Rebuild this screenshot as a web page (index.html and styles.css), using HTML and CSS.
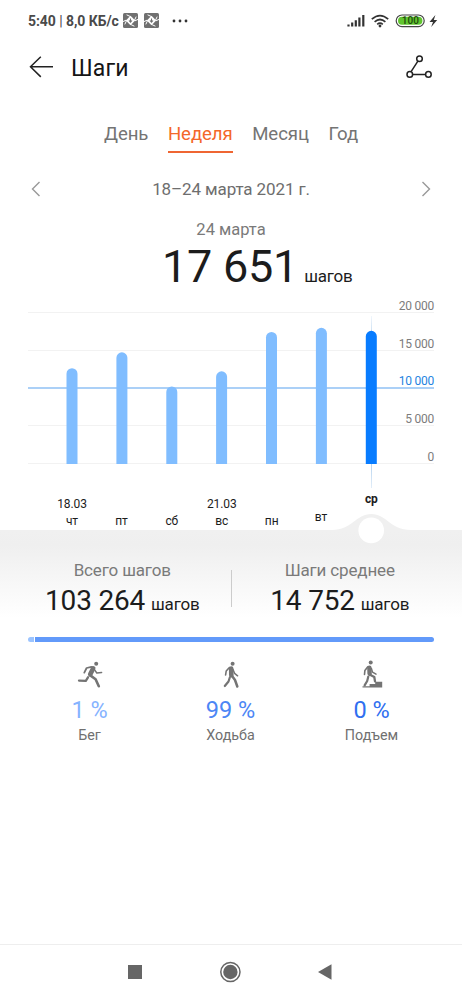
FILE: index.html
```html
<!DOCTYPE html>
<html lang="ru">
<head>
<meta charset="utf-8">
<title>Шаги</title>
<link rel="stylesheet" href="styles.css">
</head>
<body>
<div class="screen">
  <div class="status">
    <span class="status-text">5:40 <i>|</i> 8,0 КБ/с</span>
    <svg class="app-badge" width="15" height="15" viewBox="0 0 15 15"><rect width="15" height="15" rx="1.5" fill="#707070"/><path d="M7.5 2.8 12.2 7.5 7.5 12.2 2.8 7.5z" fill="#fff"/><path d="M3.6 1.8 7.5 3.6M13.2 3.6 11.4 7.5M11.4 13.2 7.5 11.4M1.8 11.4 3.6 7.5M0 8.6 3 7.2M15 6.4 12 7.8" stroke="#fff" stroke-width="1"/><path d="M7.5 5.4V9M6 7.5 7.5 9.2 9 7.5" fill="none" stroke="#707070" stroke-width="1.1"/></svg>
    <svg class="app-badge" width="15" height="15" viewBox="0 0 15 15"><rect width="15" height="15" rx="1.5" fill="#707070"/><path d="M7.5 2.8 12.2 7.5 7.5 12.2 2.8 7.5z" fill="#fff"/><path d="M3.6 1.8 7.5 3.6M13.2 3.6 11.4 7.5M11.4 13.2 7.5 11.4M1.8 11.4 3.6 7.5M0 8.6 3 7.2M15 6.4 12 7.8" stroke="#fff" stroke-width="1"/><path d="M7.5 5.4V9M6 7.5 7.5 9.2 9 7.5" fill="none" stroke="#707070" stroke-width="1.1"/></svg>
    <svg class="more" width="16" height="4" viewBox="0 0 16 4"><g fill="#333"><circle cx="2" cy="2" r="1.4"/><circle cx="8" cy="2" r="1.4"/><circle cx="14" cy="2" r="1.4"/></g></svg>
    <svg class="system" width="92" height="16" viewBox="0 0 92 16">
      <path d="M1.5 13.6V11.6M5.2 13.6V9.6M8.8 13.6V7.2M12.4 13.6V4.6M16.3 13.6V2" stroke="#333" stroke-width="2.2" fill="none"/>
      <path d="M24.8 6.2Q33 -1 41.2 6.2M27.6 8.8Q33 4.2 38.4 8.8M30.2 11.3Q33 9 35.8 11.3" stroke="#333" stroke-width="1.7" fill="none"/><circle cx="33" cy="13" r="1.4" fill="#333"/>
      <rect x="49.2" y="2" width="28" height="11.6" rx="5.8" fill="#fff" stroke="#444" stroke-width="1.2"/>
      <rect x="51" y="3.8" width="24.4" height="8" rx="4" fill="#61c52f"/>
      <text class="battery-text" x="63.4" y="11.3">100</text>
      <path d="M88.4 2 82.5 8.9H86L84.2 14 90.2 6.9H86.8z" fill="#333"/>
    </svg>
  </div>

  <header class="appbar">
    <svg width="26" height="24" viewBox="0 0 26 24"><path d="M25 10.7H2.5M12.8 .7 2.5 10.7 12.8 20.9" fill="none" stroke="#222" stroke-width="1.5"/></svg>
    <h1>Шаги</h1>
    <svg class="route" width="28" height="26" viewBox="0 0 28 26"><g fill="none" stroke="#222" stroke-width="1.5"><path d="M11.9 6.2 5.1 16.7M6.7 19.4H19.3"/><circle cx="13.5" cy="3.7" r="2.8"/><circle cx="3.8" cy="19.4" r="2.8"/><circle cx="22.4" cy="19.4" r="2.8"/></g></svg>
  </header>

  <nav class="tabs"><span>День</span><span class="active">Неделя</span><span>Месяц</span><span>Год</span></nav>

  <div class="period">
    <svg width="10" height="16" viewBox="0 0 10 16"><path d="M9.5 1 2.5 8 9.5 15" fill="none" stroke="#999" stroke-width="1.4"/></svg>
    <span>18–24 марта 2021 г.</span>
    <svg width="10" height="16" viewBox="0 0 10 16"><path d="M.5 1 7.5 8 .5 15" fill="none" stroke="#999" stroke-width="1.4"/></svg>
  </div>
  <div class="day">24 марта</div>
  <div class="hero"><span class="hero-num">17 651</span><span class="unit">шагов</span></div>

  <svg class="chart" width="462" height="237" viewBox="0 293 462 237">
    <defs><linearGradient id="cursor" x1="0" y1="316" x2="0" y2="488" gradientUnits="userSpaceOnUse"><stop offset="0" stop-color="#b5d2ee" stop-opacity=".2"/><stop offset=".15" stop-color="#b5d2ee"/><stop offset=".85" stop-color="#b5d2ee"/><stop offset="1" stop-color="#b5d2ee" stop-opacity=".4"/></linearGradient></defs>
    <path d="M28 312.5H434M28 350.5H434M28 425.5H434M28 463.5H434" stroke="#f2f2f2"/>
    <path d="M28 388H434" stroke="#8fc0f4" stroke-width="1.4"/>
    <rect x="371" y="316" width="1" height="172" fill="url(#cursor)"/>
    <g class="bars">
      <path d="M66.5 464V373.7a5.5 5.5 0 0 1 11 0V464z"/>
      <path d="M116.4 464V357.8a5.5 5.5 0 0 1 11 0V464z"/>
      <path d="M166.3 464V392a5.5 5.5 0 0 1 11 0V464z"/>
      <path d="M216.1 464V376.8a5.5 5.5 0 0 1 11 0V464z"/>
      <path d="M266 464V337.5a5.5 5.5 0 0 1 11 0V464z"/>
      <path d="M315.9 464V333.3a5.5 5.5 0 0 1 11 0V464z"/>
      <path class="selected" d="M365.8 464V336.3a5.5 5.5 0 0 1 11 0V464z"/>
    </g>
    <g class="scale"><text x="434" y="310">20 000</text><text x="434" y="347.7">15 000</text><text class="goal" x="434" y="385.3">10 000</text><text x="434" y="423">5 000</text><text x="434" y="461">0</text></g>
    <g class="days"><text x="72" y="507.5">18.03</text><text x="221.8" y="507.5">21.03</text><text x="72" y="524.6">чт</text><text x="121.5" y="524.6">пт</text><text x="171.8" y="524.6">сб</text><text x="221.8" y="524.6">вс</text><text x="271.7" y="524.6">пн</text><text x="321" y="520.5">вт</text><text class="today" x="371.3" y="503">ср</text></g>
    <path d="M332 530C352 530 356 514 371.3 514S390 530 411 530z" fill="#f0f0f0"/>
    <circle cx="371.2" cy="530.4" r="12.8" fill="#fff"/>
  </svg>

  <section class="totals">
    <div class="total"><div class="label">Всего шагов</div><div class="value">103 264<span class="unit">шагов</span></div></div>
    <div class="divider"></div>
    <div class="total"><div class="label">Шаги среднее</div><div class="value">14 752<span class="unit">шагов</span></div></div>
  </section>

  <div class="share"><div class="share-run"></div><div class="share-walk"></div></div>

  <section class="modes">
    <div class="mode run">
      <svg width="28" height="30" viewBox="0 0 28 30"><circle cx="20.2" cy="3.8" r="2" fill="#747474"/><g fill="none" stroke="#747474" stroke-linecap="round" stroke-linejoin="round"><path d="M17.2 8.4 14.2 14.4" stroke-width="4.6"/><path d="M15.4 6.8 10.6 8 8.3 12.6" stroke-width="1.8"/><path d="M19 10.4 20.8 13 25.6 12.6" stroke-width="1.5"/><path d="M14.6 15.6 19.6 19.2 22.8 26.2" stroke-width="2.6"/><path d="M12 17.3 9.8 20.8 3 20.6" stroke-width="2.3"/></g></svg>
      <div class="percent">1 %</div><div class="name">Бег</div>
    </div>
    <div class="mode walk">
      <svg width="28" height="30" viewBox="0 0 28 30"><circle cx="15.6" cy="3.8" r="2" fill="#747474"/><g fill="none" stroke="#747474" stroke-linecap="round" stroke-linejoin="round"><path d="M14.2 8.6 14.3 15.2" stroke-width="4.6"/><path d="M12.4 7.5 9.2 11 8.6 15" stroke-width="1.6"/><path d="M16 9.6 17.6 13.3 20.6 15.8" stroke-width="1.5"/><path d="M14.7 15.5 18 20 20.3 26.5" stroke-width="2.5"/><path d="M12.8 17.5 11.5 21.5 7.8 26" stroke-width="2.2"/></g></svg>
      <div class="percent">99 %</div><div class="name">Ходьба</div>
    </div>
    <div class="mode climb">
      <svg width="28" height="30" viewBox="0 0 28 30"><circle cx="12.7" cy="2.6" r="2" fill="#747474"/><path d="M4.5 27.6V26.2H11.6V24H17.2V21.8H24.2V27.6z" fill="#747474"/><g fill="none" stroke="#747474" stroke-linecap="round" stroke-linejoin="round"><path d="M11.4 7.8 11.6 13.8" stroke-width="4.4"/><path d="M9.6 6.9 6.9 10.4 6.5 14.5" stroke-width="1.6"/><path d="M13.4 8.5 14.5 12.1 18 14.2" stroke-width="1.5"/><path d="M12 14.8 16.3 17 17 21.4" stroke-width="2.3"/><path d="M10.3 16.5 9.2 21 6.6 25.4" stroke-width="2.2"/></g></svg>
      <div class="percent">0 %</div><div class="name">Подъем</div>
    </div>
  </section>

  <footer class="navbar">
    <svg width="462" height="56" viewBox="0 945 462 56"><g fill="#666"><rect x="128" y="965" width="14" height="14"/><circle cx="230.4" cy="972" r="7.2"/><path d="M318 972 331.5 964.3V979.7z"/></g><circle cx="230.4" cy="972" r="9.6" fill="none" stroke="#666" stroke-width="1.5"/></svg>
  </footer>
</div>
</body>
</html>
```
FILE: styles.css
```css
* { box-sizing: border-box; }
body { margin: 0; background: #fff; font-family: Roboto, "Liberation Sans", sans-serif; color: #1c1c1c; }
svg { display: block; flex: none; }
.screen { width: 462px; height: 1000px; display: flex; flex-direction: column; overflow: hidden; }

.status { height: 42px; padding: 0 23px 0 28px; display: flex; align-items: center; }
.status-text { font-size: 14px; font-weight: 700; color: #4a4a4a; white-space: nowrap; width: 95px; letter-spacing: -0.06px; }
.status-text i { font-style: normal; font-weight: 400; }
.app-badge { margin: -2px 6px 0 0; }
.more { margin-left: 7px; }
.system { margin-left: auto; }
.battery-text { font-size: 10px; font-weight: 500; fill: #1d4a0c; text-anchor: middle; }

.appbar { height: 51px; padding: 0 28px; display: flex; align-items: center; }
.appbar h1 { margin: 2px 0 0 17px; font-size: 23px; line-height: 30px; font-weight: 400; color: #151515; letter-spacing: 0.15px; }
.route { margin-left: auto; }

.tabs { height: 60px; padding: 29px 0 0 104px; display: flex; gap: 19.6px; align-items: flex-start; font-size: 18.6px; line-height: 24px; color: #747474; letter-spacing: -0.08px; }
.tabs span { height: 31px; }
.tabs .active { color: #f4672a; border-bottom: 2px solid #ef6632; }

.period { height: 67px; padding: 4px 30px 0; display: flex; align-items: center; justify-content: space-between; font-size: 17px; letter-spacing: -0.12px; color: #6e6e6e; }
.day { height: 20px; line-height: 20px; font-size: 16.5px; color: #7a7a7a; text-align: center; }
.hero { height: 53px; padding-left: 162px; display: flex; align-items: baseline; line-height: 53px; }
.hero-num { font-size: 45px; letter-spacing: -0.25px; }
.hero .unit { margin-left: 6px; font-size: 17px; letter-spacing: -0.2px; }

.chart { overflow: visible; position: relative; }
.bars { fill: #80bdff; }
.bars .selected { fill: #087cff; }
.scale { font-size: 12px; fill: #7c7c7c; text-anchor: end; letter-spacing: -0.25px; }
.scale .goal { fill: #2583df; }
.days { font-size: 12px; fill: #1c1c1c; text-anchor: middle; letter-spacing: -0.1px; }
.days .today { font-weight: 700; }

.totals { height: 107px; padding-top: 28px; display: flex; background: linear-gradient(#f0f0f0, #efefef 15px, #fff 88px); }
.total { flex: 1; text-align: center; }
.total:first-child { padding-left: 14px; }
.total:last-child { padding-right: 14px; }
.total .label { font-size: 17px; line-height: 24px; color: #7a7a7a; letter-spacing: -0.15px; }
.total .value { margin-top: 1px; font-size: 28px; line-height: 36px; letter-spacing: -0.2px; }
.total .unit { margin-left: 6px; font-size: 17px; letter-spacing: -0.2px; }
.divider { width: 1px; height: 37px; margin-top: 12px; background: #ccc; }

.share { height: 5px; margin: 0 28px; display: flex; gap: 1px; }
.share-run { width: 6px; background: #9bc4ff; border-radius: 3px 0 0 3px; }
.share-walk { flex: 1; background: #629afa; border-radius: 0 3px 3px 0; }

.modes { padding: 18px 19px 0; display: grid; grid-template-columns: repeat(3, 141px); }
.mode { display: flex; flex-direction: column; align-items: center; }
.percent { margin-top: 4px; font-size: 23.5px; line-height: 32px; }
.name { font-size: 14.3px; line-height: 18px; color: #707070; }
.run .percent { color: #85b3ff; }
.walk .percent { color: #4c86f5; }
.climb .percent { color: #2f6ff0; }

.navbar { margin-top: auto; height: 56px; border-top: 1px solid #eee; }
```
